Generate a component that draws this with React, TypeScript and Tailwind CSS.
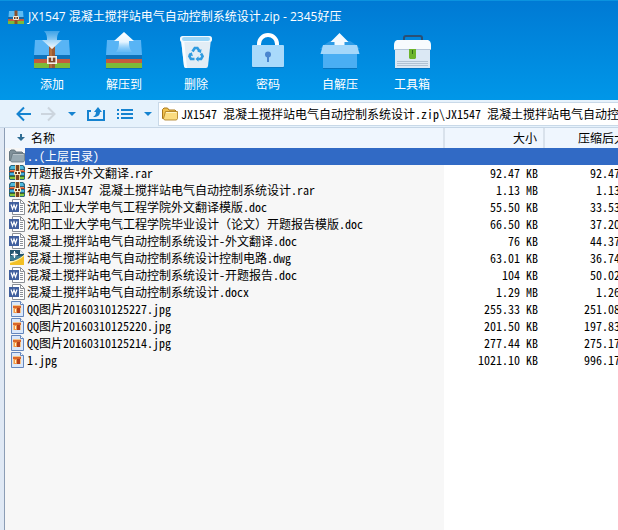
import React from 'react';

type Kind = 'folder' | 'rar' | 'doc' | 'dwg' | 'jpg';

interface Entry {
  name: string;
  kind: Kind;
  size: string;
  packed: string;
}

const entries: Entry[] = [
  { name: '..(上层目录)', kind: 'folder', size: '', packed: '' },
  { name: '开题报告+外文翻译.rar', kind: 'rar', size: '92.47 KB', packed: '92.47 KB' },
  { name: '初稿-JX1547 混凝土搅拌站电气自动控制系统设计.rar', kind: 'rar', size: '1.13 MB', packed: '1.13 MB' },
  { name: '沈阳工业大学电气工程学院外文翻译模版.doc', kind: 'doc', size: '55.50 KB', packed: '33.53 KB' },
  { name: '沈阳工业大学电气工程学院毕业设计（论文）开题报告模版.doc', kind: 'doc', size: '66.50 KB', packed: '37.20 KB' },
  { name: '混凝土搅拌站电气自动控制系统设计-外文翻译.doc', kind: 'doc', size: '76 KB', packed: '44.37 KB' },
  { name: '混凝土搅拌站电气自动控制系统设计控制电路.dwg', kind: 'dwg', size: '63.01 KB', packed: '36.74 KB' },
  { name: '混凝土搅拌站电气自动控制系统设计-开题报告.doc', kind: 'doc', size: '104 KB', packed: '50.02 KB' },
  { name: '混凝土搅拌站电气自动控制系统设计.docx', kind: 'doc', size: '1.29 MB', packed: '1.26 MB' },
  { name: 'QQ图片20160310125227.jpg', kind: 'jpg', size: '255.33 KB', packed: '251.08 KB' },
  { name: 'QQ图片20160310125220.jpg', kind: 'jpg', size: '201.50 KB', packed: '197.83 KB' },
  { name: 'QQ图片20160310125214.jpg', kind: 'jpg', size: '277.44 KB', packed: '275.17 KB' },
  { name: '1.jpg', kind: 'jpg', size: '1021.10 KB', packed: '996.17 KB' },
];

function ArchiveBox() {
  return (
    <>
      <path d="M3 10h34l1 15H2z" fill="#58b4f5" />
      <path d="M2 25h36v5H2z" fill="#0d72bb" />
      <path d="M2 29h36v4H2z" fill="#c65b3e" />
      <path d="M2 33h36v5H2z" fill="#7dbb38" />
      <path d="M2 38h36v1H2z" fill="#0a5c9e" opacity=".6" />
    </>
  );
}

function AppIcon() {
  return (
    <svg viewBox="0 0 16 16" className="size-4 shrink-0" aria-hidden="true">
      <path d="M1 2h14l.5 6H.5z" fill="#5cbcf4" />
      <path d="M0 8h16v2H0z" fill="#1467a5" />
      <path d="M0 10h16v2H0z" fill="#c65b3e" />
      <path d="M0 12h16v3H0z" fill="#7dbb38" />
      <path d="M6.500 1.500h3V15h-3z" fill="#8a4f2b" />
      <path d="M5.500 7.500h5v3h-5z" fill="#6d3b1d" stroke="#f6ead8" />
      <path d="M7.500 7h1v3h-1z" fill="#f6ead8" />
    </svg>
  );
}

function AddIcon() {
  return (
    <svg viewBox="0 0 40 40" className="size-10" aria-hidden="true">
      <defs>
        <linearGradient id="addArrow" x1="0" y1="0" x2="0" y2="1">
          <stop offset="0" stopColor="#7cc4f5" stopOpacity=".5" />
          <stop offset="1" stopColor="#fff" />
        </linearGradient>
      </defs>
      <ArchiveBox />
      <path d="M17 16h6v22h-6z" fill="#9a5a34" />
      <path d="M18 16h2v22h-2z" fill="#b5703f" />
      <rect x="15.8" y="26.8" width="8.4" height="6.4" fill="#7d4528" stroke="#f4efe9" strokeWidth="1.6" />
      <path d="M19.200 27h1.600v4h-1.600z" fill="#f4efe9" />
      <path d="M12 1h16c-3 3-3 6-3 9h5L20 19 10 10h5c0-3 0-6-3-9z" fill="url(#addArrow)" />
    </svg>
  );
}

function ExtractIcon() {
  return (
    <svg viewBox="0 0 40 40" className="size-10" aria-hidden="true">
      <defs>
        <linearGradient id="outArrow" x1="0" y1="0" x2="0" y2="1">
          <stop offset="0" stopColor="#fff" />
          <stop offset=".5" stopColor="#e6f5ff" />
          <stop offset="1" stopColor="#9ad4fb" stopOpacity=".2" />
        </linearGradient>
      </defs>
      <ArchiveBox />
      <path d="M20 2l10 9h-5c0 4 0 7 3 11H12c3-4 3-7 3-11h-5z" fill="url(#outArrow)" />
    </svg>
  );
}

function TrashIcon() {
  return (
    <svg viewBox="0 0 40 40" className="size-10" aria-hidden="true">
      <path d="M5 9h30l-3 27q-.3 2-2 2H10q-1.700 0-2-2z" fill="#e3edf5" />
      <path d="M5 9h3l3 29h-1q-1.700 0-2-2z" fill="#f8fcff" />
      <rect x="4" y="6" width="32" height="6" rx="2.500" fill="#f2f9fe" />
      <rect x="6" y="7" width="28" height="4" rx="2" fill="#9bd6f7" />
      <g fill="none" stroke="#2f9be0" strokeWidth="2.600">
        <path d="M16.500 21.500l2.300-3.500h2.600l2 3" />
        <path d="M25 23.500l1.600 2.800-1.500 2.700h-3" />
        <path d="M18.500 29h-3.600l-1.500-2.700 1.600-2.800" />
      </g>
      <path d="M25.500 19l-.5 4-3.800-1.500zM22.500 26.300v5.400l-3-2.700zM12.200 24.500l3.600-2.200 1.100 4z" fill="#2f9be0" />
    </svg>
  );
}

function LockIcon() {
  return (
    <svg viewBox="0 0 40 40" className="size-10" aria-hidden="true">
      <path d="M11 17v-3a9 9 0 0 1 18 0v3" fill="none" stroke="#fff" strokeWidth="4" />
      <rect x="4" y="15" width="32" height="22" rx="1" fill="#a9dafb" />
      <path d="M4 37h32v1H4z" fill="#0a6fb8" opacity=".6" />
      <circle cx="20" cy="24.500" r="3" fill="#4a86cf" />
      <path d="M19 26h2v6h-2z" fill="#4a86cf" />
    </svg>
  );
}

function SfxIcon() {
  return (
    <svg viewBox="0 0 40 40" className="size-10" aria-hidden="true">
      <path d="M4 15l6-4h20l6 4 4 4H0z" fill="#3fa4ea" opacity=".7" />
      <path d="M3 23h34v15H3z" fill="#4aaef3" />
      <path d="M3 38h34v1H3z" fill="#0a5c9e" opacity=".5" />
      <path d="M3 15h34l2.500 9H.5z" fill="#a4d7fa" />
      <path d="M19.500 3l9 9h-4v3h-10v-3h-4z" fill="#f3faff" />
    </svg>
  );
}

function ToolboxIcon() {
  return (
    <svg viewBox="0 0 40 40" className="size-10" aria-hidden="true">
      <path d="M12 11V8q0-2 2-2h14q2 0 2 2v3" fill="none" stroke="#2b4f74" strokeWidth="2" />
      <path d="M3 18h35v20H3z" fill="#dbe8f4" />
      <path d="M5 10h31q3 1 3 5v4H2v-4q0-4 3-5z" fill="#f7fbfe" />
      <path d="M2 19h37v1H2z" fill="#b4c6d8" />
      <path d="M5 31h31v1H5zM5 33h31v1H5zM5 35h31v1H5z" fill="#b0c1d3" />
      <path d="M3 38h35v1H3z" fill="#0a5c9e" opacity=".5" />
      <path d="M17 19h7v9l-1 1h-5l-1-1z" fill="#6cb42c" />
      <path d="M20 20h1v4h-1z" fill="#33691a" />
    </svg>
  );
}

function RarIcon() {
  return (
    <svg viewBox="0 0 16 16" className="size-4 shrink-0" aria-hidden="true">
      <path d="M2 0h12l2 2v12l-1 1H1l-1-1V2z" fill="#2a6480" />
      <path d="M2 1h12l1 3H1z" fill="#4fb9dc" />
      <path d="M1 5h14v1H1z" fill="#f0845a" />
      <path d="M0 6h16v1H0z" fill="#b8431f" />
      <path d="M1 8h14v2H1z" fill="#46b0e0" />
      <path d="M1 12h14v2H1z" fill="#84c63c" />
      <path d="M0 11h16v1H0z" fill="#3d6b24" />
      <path d="M6 0h1v15H6zM10 0h1v15h-1z" fill="#e9c98d" />
      <path d="M7 0h3v15H7z" fill="#7a4420" />
      <path d="M5.500 6.500h6v3h-6z" fill="#6d3b1d" stroke="#fbe7bd" />
      <path d="M8 6h1v3H8z" fill="#fff" />
    </svg>
  );
}

function FolderIcon({ gray = false }: { gray?: boolean }) {
  const edge = gray ? '#66757e' : '#a8781c';
  const back = gray ? '#7f9099' : '#f0c14d';
  const front = gray ? '#98a9b2' : '#fbdc80';
  return (
    <svg viewBox="0 0 16 16" className="size-4 shrink-0" aria-hidden="true">
      <path d="M.5 12.500v-9l1.500-1.500h3.500l1.500 2h6l1.500 1.500v7z" fill={back} stroke={edge} />
      <path d="M3.500 5.500h12v7l-1 1.500h-12l-1-1.500z" fill={front} stroke={edge} strokeWidth=".8" />
      <path d="M4 6.500h10.500" stroke={gray ? '#b9c4ca' : '#fff4c4'} />
    </svg>
  );
}

function DocIcon() {
  return (
    <svg viewBox="0 0 16 16" className="size-4 shrink-0" aria-hidden="true">
      <path d="M3.500.5h8l4 4v11h-12z" fill="#fff" stroke="#8b8f96" />
      <path d="M11.500.5v4h4" fill="none" stroke="#8b8f96" />
      <path d="M11 6.500h3M11 8.500h3M11 10.500h3M11 12.500h3" stroke="#8b8f96" />
      <path d="M0 3h10v10H0z" fill="#405f9e" />
      <path d="M2 5.500l1.500 4.500L5 6l1.500 4L8 5.500" fill="none" stroke="#fff" strokeWidth="1.200" />
    </svg>
  );
}

function DwgIcon() {
  return (
    <svg viewBox="0 0 16 16" className="size-4 shrink-0" aria-hidden="true">
      <path d="M1 0h10l4 4v11H1z" fill="#25566f" />
      <path d="M1 6h14v4H1z" fill="#3e7d93" />
      <path d="M11 0l4 4h-4z" fill="#e5eef2" />
      <path d="M1 12c5-1 9-3 14-7v10H1z" fill="#f3c024" />
      <path d="M1 11c5 0 9-2 14-6v1c-5 4-9 6-14 7z" fill="#fff3b5" />
      <path d="M5.500 1v7M2 4.500h7" stroke="#fff" />
      <path d="M4 3h3v3H4z" fill="none" stroke="#fff" strokeWidth=".6" />
    </svg>
  );
}

function JpgIcon() {
  return (
    <svg viewBox="0 0 16 16" className="size-4 shrink-0" aria-hidden="true">
      <path d="M2.500.5h9l3 3v12h-12z" fill="#dbe8fa" stroke="#6486bd" />
      <path d="M11.500.5v3h3" fill="#fff" stroke="#6486bd" />
      <path d="M4 4h8v8H4z" fill="#f6c48a" />
      <path d="M4 5h8v2H4z" fill="#d9672c" />
      <path d="M5 7h3v5H5z" fill="#f39a4a" />
      <path d="M8 7h3v5H8z" fill="#b5401b" />
      <path d="M6 8h1v3H6z" fill="#fff1cf" />
    </svg>
  );
}

function FileIcon({ kind }: { kind: Kind }) {
  if (kind === 'folder') return <FolderIcon gray />;
  if (kind === 'rar') return <RarIcon />;
  if (kind === 'doc') return <DocIcon />;
  if (kind === 'dwg') return <DwgIcon />;
  return <JpgIcon />;
}

function Caret() {
  return (
    <svg viewBox="0 0 8 4" className="h-1 w-2" aria-hidden="true">
      <path d="M0 0h8L4 4z" fill="#1583d0" />
    </svg>
  );
}

const tools = [
  { label: '添加', icon: <AddIcon /> },
  { label: '解压到', icon: <ExtractIcon /> },
  { label: '删除', icon: <TrashIcon /> },
  { label: '密码', icon: <LockIcon /> },
  { label: '自解压', icon: <SfxIcon /> },
  { label: '工具箱', icon: <ToolboxIcon /> },
];

export default function App() {
  return (
    <div className="flex min-h-screen flex-col overflow-hidden bg-white font-['Noto_Sans_Mono_CJK_SC','Liberation_Mono','Noto_Sans_CJK_SC',monospace] text-xs text-black">
      <header className="border-t border-[#0b93df] bg-linear-to-b from-[#007ad4] to-[#0097e8] pb-1.5 font-['Open_Sans','Noto_Sans_CJK_SC',sans-serif] text-white">
        <div className="flex h-[29px] items-center gap-1 pt-0.5 pl-2">
          <AppIcon />
          <h1 className="text-xs whitespace-nowrap">JX1547 混凝土搅拌站电气自动控制系统设计.zip - 2345好压</h1>
        </div>
        <div className="flex pl-4">
          {tools.map((tool) => (
            <button key={tool.label} type="button" className="flex w-18 shrink-0 flex-col items-center gap-1.5">
              {tool.icon}
              <span className="leading-[18px]">{tool.label}</span>
            </button>
          ))}
        </div>
      </header>

      {/* Navigation and address */}
      <nav className="flex h-7 items-center border-b border-[#c6d6e6] bg-[#e6f2fc] pl-3">
        <button type="button" aria-label="后退" className="flex w-6 justify-center">
          <svg viewBox="0 0 16 16" className="size-4" aria-hidden="true">
            <path d="M15 8H2M8 1.500L1.500 8 8 14.500" fill="none" stroke="#1583d0" strokeWidth="2" />
          </svg>
        </button>
        <button type="button" aria-label="前进" className="flex w-6 justify-center">
          <svg viewBox="0 0 16 16" className="size-4" aria-hidden="true">
            <path d="M1 8h13M8 1.500L14.500 8 8 14.500" fill="none" stroke="#ccd5de" strokeWidth="2" />
          </svg>
        </button>
        <button type="button" aria-label="历史" className="flex w-6 justify-center">
          <Caret />
        </button>
        <button type="button" aria-label="上一级" className="flex w-6 justify-center">
          <svg viewBox="0 0 18 16" className="h-4 w-[18px]" aria-hidden="true">
            <path d="M4 5H1v9h16V5h-1" fill="none" stroke="#1583d0" strokeWidth="2" />
            <path d="M11 1l4 5h-2c0 3-2 5-7 5 2-1 3-3 3-5H7z" fill="#1583d0" />
          </svg>
        </button>
        <button type="button" aria-label="查看" className="flex w-[34px] justify-center">
          <svg viewBox="0 0 16 10" className="h-2.5 w-4" aria-hidden="true">
            <path d="M0 0h2v2H0zM4 0h12v2H4zM0 4h2v2H0zM4 4h12v2H4zM0 8h2v2H0zM4 8h12v2H4z" fill="#1583d0" />
          </svg>
        </button>
        <button type="button" aria-label="查看方式" className="flex w-3 justify-center">
          <Caret />
        </button>
        <label className="ml-1 flex h-6 min-w-0 flex-1 items-center gap-[3px] border border-r-0 border-[#c9d9e8] bg-white pl-[3px]">
          <FolderIcon />
          <input
            aria-label="地址"
            readOnly
            className="min-w-0 flex-1 outline-none"
            value="JX1547 混凝土搅拌站电气自动控制系统设计.zip\JX1547 混凝土搅拌站电气自动控制系统设计"
          />
        </label>
      </nav>

      {/* File list, the sorted column stays tinted to the bottom */}
      <main className="flex flex-1 bg-[#e0e9f5] pl-1">
        <div className="min-w-0 flex-1 overflow-hidden border-l border-[#8c9db5] bg-[linear-gradient(to_right,#f7f7f7_439px,#ffffff_439px)]">
          <table className="w-[639px] table-fixed border-collapse">
            <colgroup>
              <col className="w-[439px]" />
              <col className="w-[100px]" />
              <col className="w-[100px]" />
            </colgroup>
            <thead>
              <tr className="h-5 bg-[#eff6fe] font-['Noto_Sans_CJK_SC',sans-serif]">
                <th className="border-r-2 border-[#d9e2ec] p-0 text-left font-normal">
                  <div className="flex items-center gap-1.5 pl-3 leading-5">
                    <svg viewBox="0 0 8 8" className="size-2" aria-hidden="true">
                      <path d="M3 0h2v3h3L4 7 0 3h3z" fill="#2f6d94" />
                    </svg>
                    名称
                  </div>
                </th>
                <th className="border-r-2 border-[#d9e2ec] p-0 pr-1.5 text-right font-normal">大小</th>
                <th className="p-0 pr-1.5 text-right font-normal">压缩后大小</th>
              </tr>
            </thead>
            <tbody>
              {entries.map((entry) => {
                const selected = entry.kind === 'folder';
                return (
                  <tr key={entry.name} className="h-[17px] align-top leading-[15px] whitespace-pre">
                    <td className="p-0">
                      <div className="flex h-[17px] items-start pl-1">
                        <FileIcon kind={entry.kind} />
                        <span className={selected ? 'flex-1 self-stretch bg-[#316ac5] pl-0.5 text-white' : 'pl-0.5'}>
                          {entry.name}
                        </span>
                      </div>
                    </td>
                    <td className={selected ? 'bg-[#316ac5] p-0' : 'p-0 pr-1.5 text-right'}>{entry.size}</td>
                    <td className={selected ? 'bg-[#316ac5] p-0' : 'p-0 pr-1.5 text-right'}>{entry.packed}</td>
                  </tr>
                );
              })}
            </tbody>
          </table>
        </div>
      </main>
    </div>
  );
}
